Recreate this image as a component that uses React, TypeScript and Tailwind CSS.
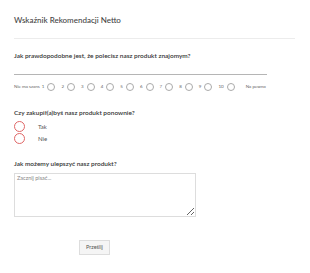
const scale = [1, 2, 3, 4, 5, 6, 7, 8, 9, 10];

const App = () => {
  return (
    <div className="w-[310px] h-[273px] bg-white pl-[14px] font-['Lato',sans-serif] text-[#333]">
      <div className="pt-[15px] text-[8px] leading-[11px] font-medium text-[#444]">
        Wskaźnik Rekomendacji Netto
      </div>
      <div className="mt-[12px] h-px w-[281px] bg-[#ececec]" />

      <div className="mt-[13px] text-[6.5px] leading-[8px] font-semibold text-[#333]">
        Jak prawdopodobne jest, że polecisz nasz produkt znajomym?
      </div>
      <div className="mt-[14px] h-px w-[253px] bg-[#b5b5b5]" />
      <div className="mt-[8px] flex items-center text-[4.5px] leading-[8px] text-[#666]">
        <span>Nie ma szans</span>
        {scale.map((n) => (
          <div key={n} className="flex items-center">
            <span className="ml-[2px]">{n}</span>
            <span className="ml-[3px] mr-[4px] size-[8px] rounded-full border border-[#aaa]" />
          </div>
        ))}
        <span className="ml-[7px]">Na pewno</span>
      </div>

      <div className="mt-[18px] text-[6.5px] leading-[8px] font-semibold text-[#333]">
        Czy zakupił(a)byś nasz produkt ponownie?
      </div>
      <div className="mt-[4px] flex flex-col gap-[1px]">
        {["Tak", "Nie"].map((o) => (
          <label key={o} className="flex h-[11px] items-center">
            <span className="size-[11px] rounded-full border border-[#e06666]" />
            <span className="ml-[13px] text-[6px] text-[#555]">{o}</span>
          </label>
        ))}
      </div>

      <div className="mt-[16px] text-[6.5px] leading-[8px] font-semibold text-[#333]">
        Jak możemy ulepszyć nasz produkt?
      </div>
      <textarea
        placeholder="Zacznij pisać..."
        className="mt-[5px] block h-[44px] w-[182px] resize-y border border-[#ddd] px-[2px] py-[1px] text-[5.5px] leading-[7px] text-[#333] placeholder:text-[#888] outline-none"
      />

      <div className="mt-[14px] pl-[65px]">
        <button className="h-[15px] w-[31px] border border-[#ddd] bg-[#f5f5f5] text-[5.5px] text-[#555]">
          Prześlij
        </button>
      </div>
    </div>
  );
};

export default App;
